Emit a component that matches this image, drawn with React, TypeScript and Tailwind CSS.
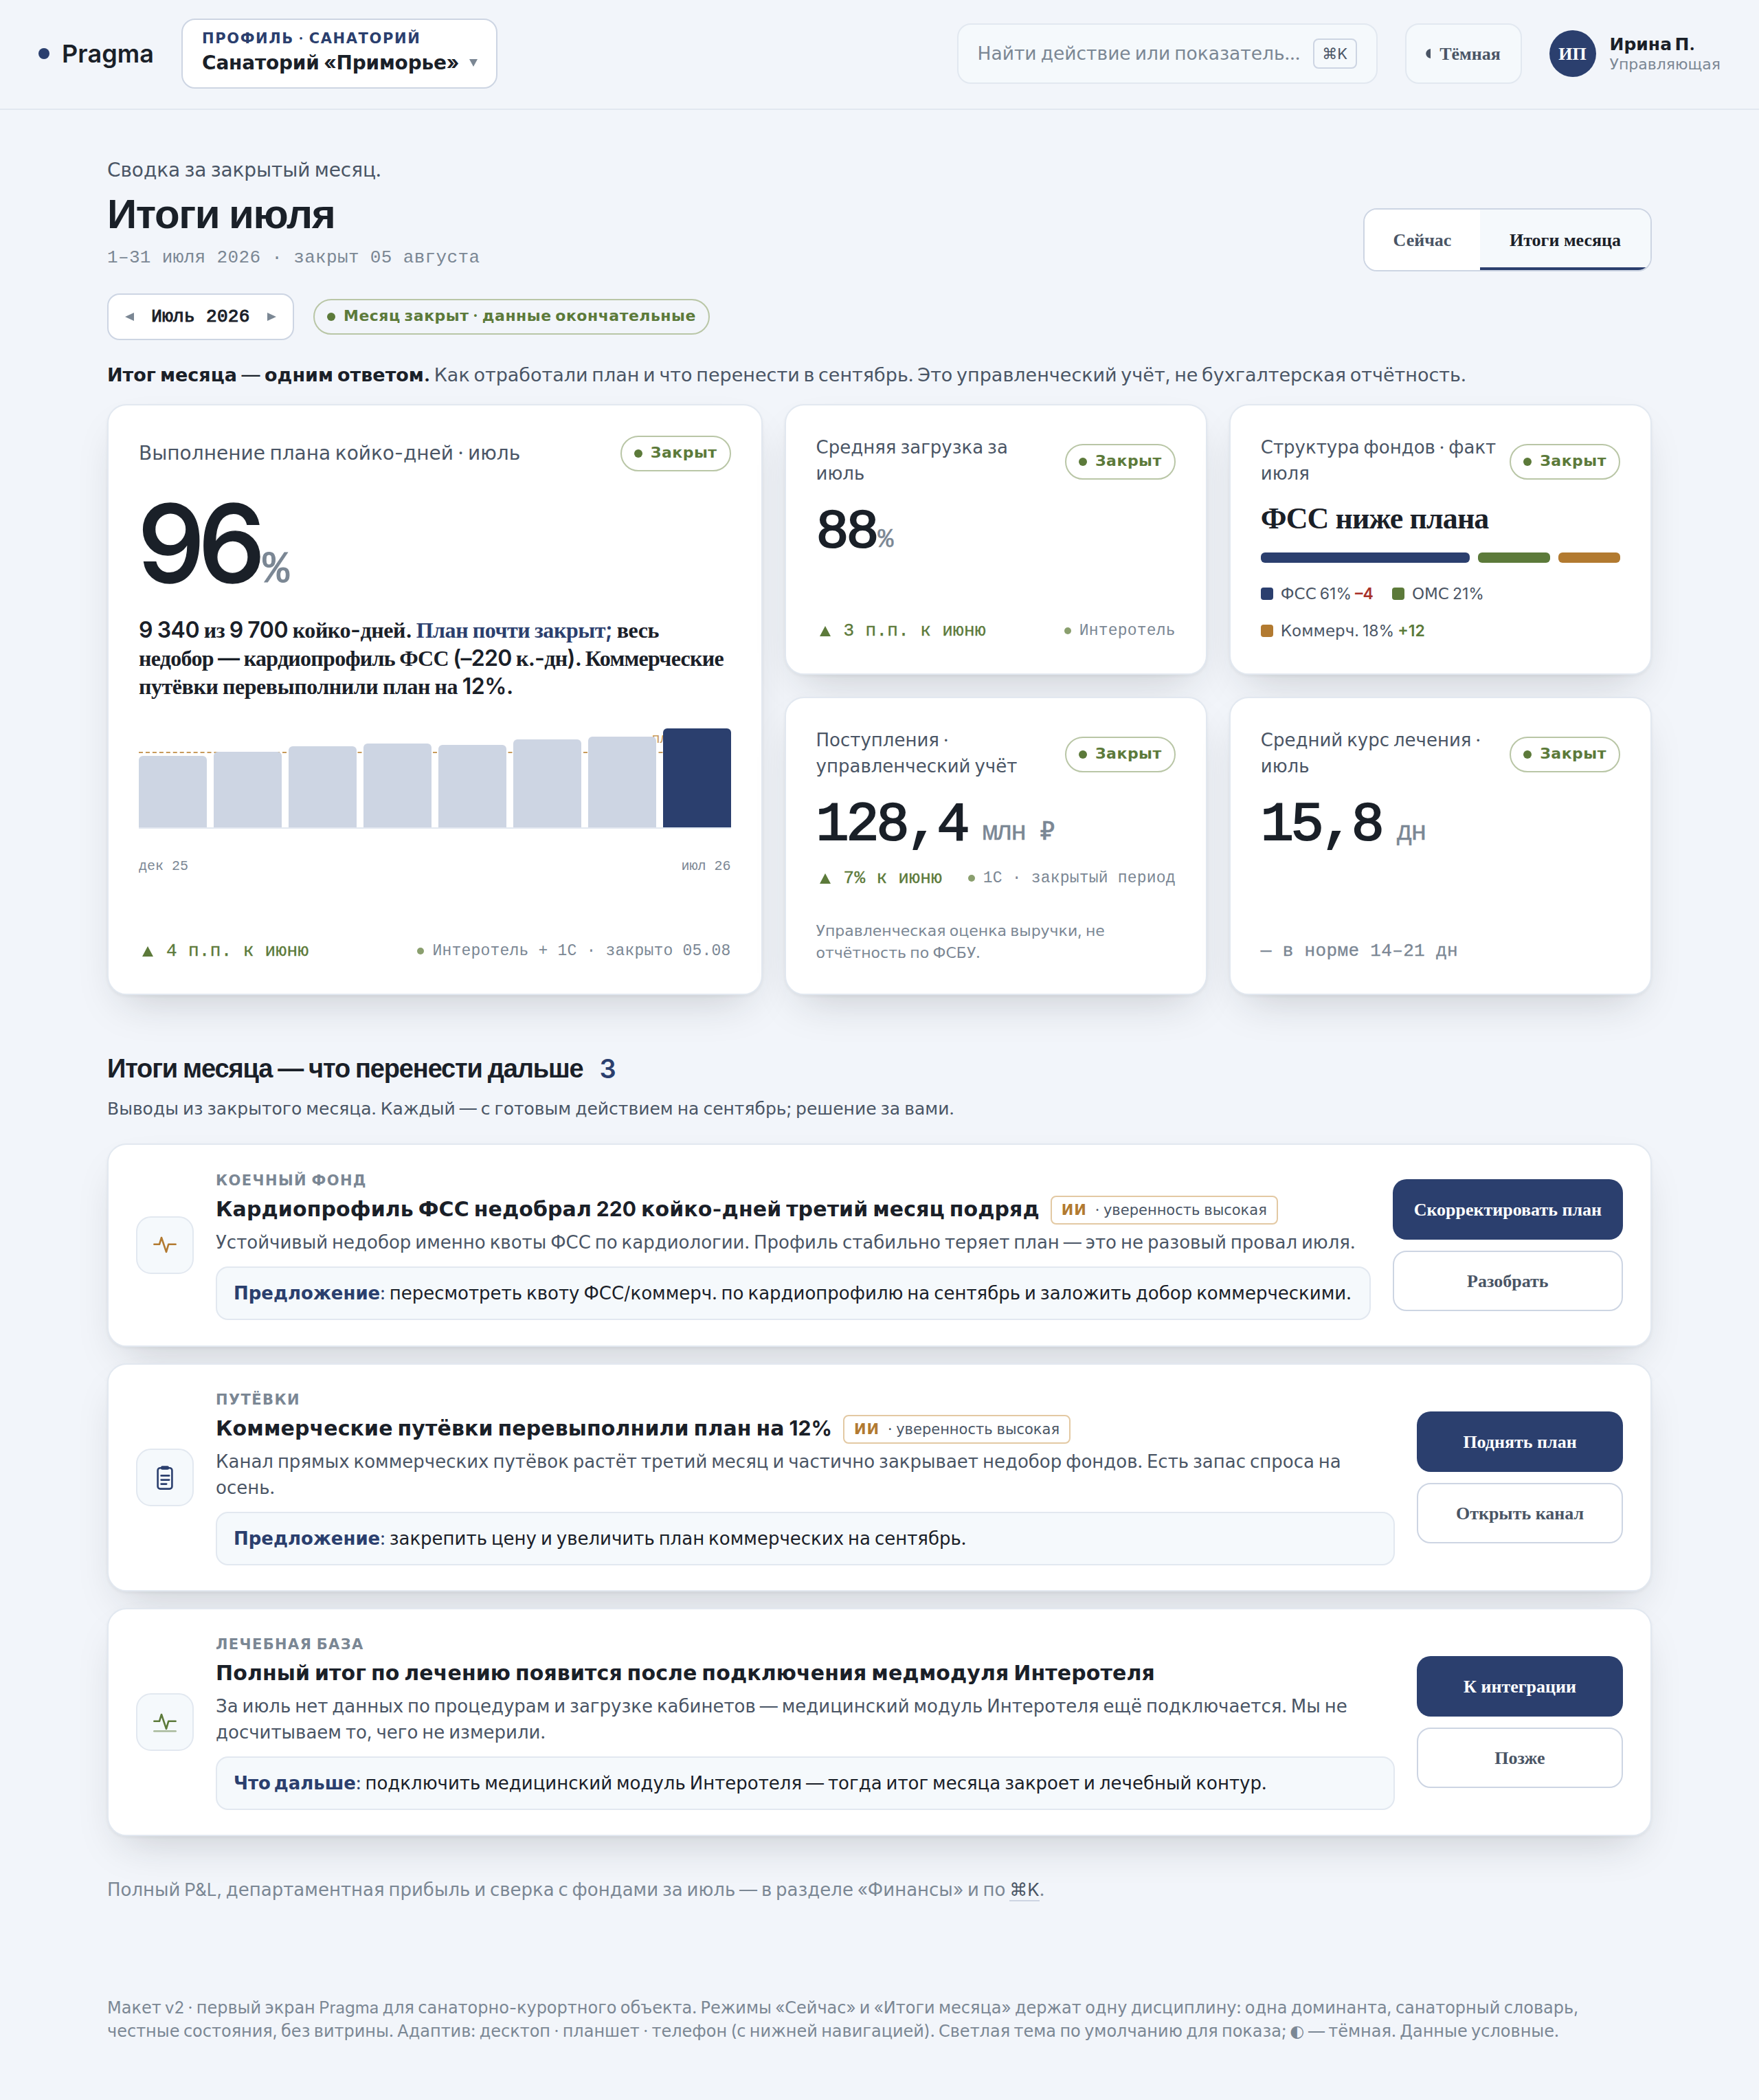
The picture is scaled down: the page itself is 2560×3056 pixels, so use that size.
import React from 'react';
import clsx from 'clsx';

interface MixProps {
  children: string;
  serif?: boolean;
}

// Latin, digits and punctuation keep the parent face, Cyrillic runs get their own one
const Mix: React.FC<MixProps> = ({ children, serif = false }) => (
  <>
    {children.split(/([\u0400-\u04FF◐]+)/).map((part, i) =>
      i % 2 === 1 ? (
        <span
          key={i}
          className={clsx(
            'leading-none',
            serif ? "font-['Liberation_Serif',serif]" : "font-['DejaVu_Sans',sans-serif]"
          )}
        >
          {part}
        </span>
      ) : (
        part
      )
    )}
  </>
);

const MONO = "font-['Liberation_Mono',monospace] [word-spacing:0px]";
const SERIF = "font-['Liberation_Serif',serif] font-bold [word-spacing:0px]";
const CARD =
  'rounded-[28px] border-2 border-[#e2e8f0] bg-white shadow-[0_2px_4px_rgba(26,32,40,0.05),0_28px_64px_-24px_rgba(26,32,40,0.21)]';

const StatusPill: React.FC<{ label: string }> = ({ label }) => (
  <span className="flex h-[52px] shrink-0 items-center gap-3 rounded-full border-2 border-[#b9c6a6] px-[18px] text-[22px] font-bold tracking-[0.5px] whitespace-nowrap text-[#5c7a3a] [word-spacing:0px]">
    <i className="size-3 rounded-full bg-[#5c7a3a]" />
    <span className="-mt-[3px]">
      <Mix>{label}</Mix>
    </span>
  </span>
);

const CardHead: React.FC<{ title: string; large?: boolean }> = ({ title, large }) => (
  <div className="flex items-center justify-between">
    <h3 className={clsx('-mt-0.5 leading-[38px] whitespace-pre text-[#4a5565]', large ? 'text-[28px]' : 'mb-0.5 text-[26px]')}>
      <Mix>{title}</Mix>
    </h3>
    <StatusPill label="Закрыт" />
  </div>
);

interface FootProps {
  delta: string;
  arrow?: boolean;
  source?: string;
}

const CardFoot: React.FC<FootProps> = ({ delta, arrow = true, source }) => (
  <div className={clsx(MONO, 'flex h-9 items-center justify-between whitespace-nowrap')}>
    <span
      className={clsx(
        'flex items-center text-[26px] tracking-[0.35px] [-webkit-text-stroke:0.35px]',
        arrow ? 'text-[#5c7a3a]' : 'text-[#7b8794]'
      )}
    >
      {arrow && (
        <svg className="mr-[19px] ml-[5px] size-4" viewBox="0 0 16 16" fill="currentColor">
          <path d="M8 1l8 15H0z" />
        </svg>
      )}
      {delta}
    </span>
    {source && (
      <span className="flex items-center gap-3 text-[23px] tracking-[0.2px] text-[#7b8794]">
        <i className="size-2.5 rounded-full bg-[#8a9f6e]" />
        {source}
      </span>
    )}
  </div>
);

const Value: React.FC<{ value: string; unit: string; spaced?: boolean }> = ({ value, unit, spaced }) => (
  <div className={clsx(MONO, 'mt-3 flex h-[106px] items-baseline leading-[106px] whitespace-nowrap')}>
    <span className="text-[80px] tracking-[-4px] text-[#1a2028] [-webkit-text-stroke:2.2px]">{value}</span>
    <span
      className={clsx(
        'text-[38px] tracking-[-2px] text-[#7b8794] [-webkit-text-stroke:0.5px]',
        spaced ? 'ml-[22px]' : 'ml-0.5'
      )}
    >
      {unit}
    </span>
  </div>
);

const bars = [104, 110, 118, 122, 120, 128, 132, 144];

const PlanChart: React.FC = () => (
  <div>
    <div className="relative flex h-[162px] items-end gap-2.5 border-b-2 border-[#e2e8f0]">
      <div className="absolute inset-x-0 bottom-[108px] border-t-2 border-dashed border-[#c79a5b]" />
      <span className={clsx(MONO, 'absolute right-[19px] bottom-[116px] text-[20px] leading-6 text-[#c79a5b]')}>
        план 92%
      </span>
      {bars.map((height, i) => (
        <div
          key={i}
          className={clsx('relative flex-1 rounded-t-md', i === bars.length - 1 ? 'bg-[#2b3f6e]' : 'bg-[#cdd5e3]')}
          style={{ height }}
        />
      ))}
    </div>
    <div className={clsx(MONO, 'mt-10 flex justify-between text-[20px] leading-[30px] text-[#7b8794]')}>
      <span>дек 25</span>
      <span>июл 26</span>
    </div>
  </div>
);

const funds = [
  { name: 'ФСС 61%', delta: '–4', share: 61, color: 'bg-[#2b3f6e]', deltaColor: 'text-[#a8322a]' },
  { name: 'ОМС 21%', delta: '', share: 21, color: 'bg-[#5c7a3a]', deltaColor: '' },
  { name: 'Коммерч. 18%', delta: '+12', share: 18, color: 'bg-[#b27a30]', deltaColor: 'text-[#5c7a3a]' },
];

const PulseIcon: React.FC<{ base?: boolean }> = ({ base }) => (
  <svg
    className="size-10"
    viewBox="0 0 20 20"
    fill="none"
    stroke="currentColor"
    strokeWidth="1.3"
    strokeLinecap="round"
    strokeLinejoin="round"
  >
    <path d="M2.2 9.4H6l1.5-4.9 3.5 10.4 1.6-5.5h5.2" />
    {base && <path d="M2.2 16.6h15.6" opacity="0.5" />}
  </svg>
);

const ClipboardIcon: React.FC = () => (
  <svg
    className="size-10"
    viewBox="0 0 20 20"
    fill="none"
    stroke="currentColor"
    strokeWidth="1.3"
    strokeLinecap="round"
    strokeLinejoin="round"
  >
    <rect x="4.8" y="3.1" width="10.4" height="15.2" rx="1.8" />
    <path d="M7.3 8.7h5.8M7.3 11.8h5.8M7.3 14.8h3.8" />
    <rect x="7.6" y="2.3" width="4.8" height="1.4" rx="0.6" />
  </svg>
);

interface Insight {
  area: string;
  title: string;
  confidence?: string;
  text: string;
  lead: string;
  proposal: string;
  primary: string;
  secondary: string;
  icon: React.ReactNode;
  iconColor: string;
}

const insights: Insight[] = [
  {
    area: 'КОЕЧНЫЙ ФОНД',
    title: 'Кардиопрофиль ФСС недобрал 220 койко-дней третий месяц подряд',
    confidence: '· уверенность высокая',
    text: 'Устойчивый недобор именно квоты ФСС по кардиологии. Профиль стабильно теряет план — это не разовый провал июля.',
    lead: 'Предложение',
    proposal: 'пересмотреть квоту ФСС/коммерч. по кардиопрофилю на сентябрь и заложить добор коммерческими.',
    primary: 'Скорректировать план',
    secondary: 'Разобрать',
    icon: <PulseIcon />,
    iconColor: 'text-[#b27a30]',
  },
  {
    area: 'ПУТЁВКИ',
    title: 'Коммерческие путёвки перевыполнили план на 12%',
    confidence: '· уверенность высокая',
    text: 'Канал прямых коммерческих путёвок растёт третий месяц и частично закрывает недобор фондов. Есть запас спроса на осень.',
    lead: 'Предложение',
    proposal: 'закрепить цену и увеличить план коммерческих на сентябрь.',
    primary: 'Поднять план',
    secondary: 'Открыть канал',
    icon: <ClipboardIcon />,
    iconColor: 'text-[#2b3f6e]',
  },
  {
    area: 'ЛЕЧЕБНАЯ БАЗА',
    title: 'Полный итог по лечению появится после подключения медмодуля Интеротеля',
    text: 'За июль нет данных по процедурам и загрузке кабинетов — медицинский модуль Интеротеля ещё подключается. Мы не досчитываем то, чего не измерили.',
    lead: 'Что дальше',
    proposal: 'подключить медицинский модуль Интеротеля — тогда итог месяца закроет и лечебный контур.',
    primary: 'К интеграции',
    secondary: 'Позже',
    icon: <PulseIcon base />,
    iconColor: 'text-[#5c7a3a]',
  },
];

const InsightCard: React.FC<{ item: Insight }> = ({ item }) => (
  <article className={clsx(CARD, 'flex min-h-[296px] items-center gap-8 px-10 py-9')}>
    <div
      className={clsx(
        'flex size-[84px] shrink-0 items-center justify-center rounded-[22px] border-2 border-[#e2e8f0] bg-[#f5f9fc]',
        item.iconColor
      )}
    >
      {item.icon}
    </div>
    <div className="min-w-0 flex-1">
      <div className="text-[21px] leading-[30px] font-bold tracking-[1.4px] text-[#7b8794] [word-spacing:0px]">
        <Mix>{item.area}</Mix>
      </div>
      <div className="flex h-[54px] items-center gap-4">
        <h3 className="-mt-0.5 text-[30px] leading-[38px] font-bold tracking-[0.1px] whitespace-nowrap text-[#1a2028] [word-spacing:-0.4px]">
          <Mix>{item.title}</Mix>
        </h3>
        {item.confidence && (
          <span className="mt-0.5 flex h-[42px] items-center gap-3 rounded-lg border-2 border-[#e3c9a3] px-3.5 text-[21px] whitespace-nowrap text-[#4a5565]">
            <b className="tracking-[1px] text-[#b27a30]">
              <Mix>ИИ</Mix>
            </b>
            <span className="[word-spacing:0px]">
              <Mix>{item.confidence}</Mix>
            </span>
          </span>
        )}
      </div>
      <p className="mt-0.5 text-[26px] leading-[38px] text-[#4a5565]">
        <Mix>{item.text}</Mix>
      </p>
      <div className="mt-4 flex h-[78px] items-center rounded-[18px] border-2 border-[#e2e8f0] bg-[#f5f9fc] px-6 pb-0.5 text-[26px] whitespace-nowrap text-[#1a2028]">
        <p>
          <span className="text-[#2b3f6e]">
            <b>
              <Mix>{item.lead}</Mix>
            </b>
            :
          </span>{' '}
          <Mix>{item.proposal}</Mix>
        </p>
      </div>
    </div>
    <div className={clsx(SERIF, 'flex min-w-[300px] shrink-0 flex-col gap-4 text-[26px]')}>
      <button className="h-[88px] rounded-[20px] bg-[#2b3f6e] px-[31px] text-white">{item.primary}</button>
      <button className="h-[88px] rounded-[20px] border-2 border-[#cdd5e3] bg-white px-[29px] text-[#4a5565]">
        {item.secondary}
      </button>
    </div>
  </article>
);

const Header: React.FC = () => (
  <header className="flex h-40 items-center justify-between border-b-2 border-[#e2e8f0] px-14 pb-0.5">
    <div className="flex items-center gap-10">
      <div className="flex items-center gap-[18px] text-[36px] font-semibold tracking-[0.1px] text-[#1a2028]">
        <i className="size-4 rounded-full bg-[#2b3f6e]" />
        Pragma
      </div>
      <button className="h-[102px] w-[460px] rounded-[20px] border-2 border-[#cdd5e3] bg-white px-7 pb-1 text-left whitespace-nowrap">
        <div className="text-[21px] leading-[30px] font-bold tracking-[1.6px] text-[#2b3f6e]">
          <Mix>ПРОФИЛЬ · САНАТОРИЙ</Mix>
        </div>
        <div className="flex items-center gap-[15px] text-[28px] leading-10 font-bold tracking-[-0.2px] text-[#1a2028]">
          <span>
            <Mix>Санаторий «Приморье»</Mix>
          </span>
          <svg className="size-3 shrink-0 text-[#7b8794]" viewBox="0 0 12 12" fill="currentColor">
            <path d="M0 1h12L6 12z" />
          </svg>
        </div>
      </button>
    </div>
    <div className="flex items-center gap-10">
      <div className="flex h-[88px] w-[612px] items-center justify-between rounded-[20px] border-2 border-[#e2e8f0] bg-[#f5f9fc] px-7 text-[26.5px] whitespace-nowrap text-[#7b8794]">
        <span>
          <Mix>Найти действие или показатель…</Mix>
        </span>
        <kbd className="flex h-11 w-16 items-center justify-center rounded-lg border-2 border-[#cdd5e3] font-['DejaVu_Sans',sans-serif] text-[22px] text-[#4a5565]">
          ⌘<span className="font-['Inter',sans-serif]">K</span>
        </kbd>
      </div>
      <button
        className={clsx(
          SERIF,
          'flex h-[88px] w-[170px] items-center justify-center gap-3 rounded-[20px] border-2 border-[#e2e8f0] bg-[#f5f9fc] text-[26px] text-[#4a5565]'
        )}
      >
        <svg className="h-3.5 w-2" viewBox="0 0 8 14" fill="currentColor">
          <path d="M7 0v14C-2 12-2 2 7 0z" />
        </svg>
        Тёмная
      </button>
      <div className="flex items-center gap-5">
        <div
          className={clsx(SERIF, 'flex size-[68px] items-center justify-center rounded-full bg-[#2b3f6e] text-[26px] text-white')}
        >
          ИП
        </div>
        <div className="whitespace-nowrap">
          <div className="text-[25px] leading-[30px] font-bold text-[#1a2028]">
            <Mix>Ирина П.</Mix>
          </div>
          <div className="text-[22px] leading-7 text-[#7b8794]">
            <Mix>Управляющая</Mix>
          </div>
        </div>
      </div>
    </div>
  </header>
);

const Intro: React.FC = () => (
  <section>
    <div className="flex items-end justify-between">
      <div>
        <p className="text-[28px] leading-[42px] tracking-[-0.1px] text-[#4a5565]">
          <Mix>Сводка за закрытый месяц.</Mix>
        </p>
        <h1 className="mt-2 font-['Liberation_Sans',sans-serif] text-[60px] leading-[72px] font-bold tracking-[-1.4px] text-[#1a2028]">
          Итоги июля
        </h1>
        <p className={clsx(MONO, 'mt-2 text-[26px] leading-[39px] tracking-[0.35px] text-[#7b8794]')}>
          1–31 июля 2026 · закрыт 05 августа
        </p>
      </div>
      <div className={clsx(SERIF, 'flex h-[92px] overflow-hidden rounded-[20px] border-2 border-[#cdd5e3] text-[26px]')}>
        <button className="w-[168px] bg-white text-[#4a5565]">Сейчас</button>
        <button className="w-[248px] border-b-4 border-[#2b3f6e] bg-[#f5f9fc] pt-1 text-[#1a2028]">Итоги месяца</button>
      </div>
    </div>
    <div className="mt-8 flex items-center gap-7">
      <div
        className={clsx(
          MONO,
          'flex h-[68px] w-[272px] items-center justify-between rounded-[18px] border-2 border-[#cdd5e3] bg-white px-6 text-[26px] tracking-[0.35px] text-[#1a2028] [-webkit-text-stroke:1px]'
        )}
      >
        <svg className="size-3.5 text-[#7b8794]" viewBox="0 0 14 14" fill="currentColor">
          <path d="M0 7l13-6v12z" />
        </svg>
        Июль 2026
        <svg className="size-3.5 text-[#7b8794]" viewBox="0 0 14 14" fill="currentColor">
          <path d="M14 7L1 1v12z" />
        </svg>
      </div>
      <StatusPill label="Месяц закрыт · данные окончательные" />
    </div>
    <p className="mt-[31px] text-[27px] leading-10 whitespace-nowrap text-[#4a5565] [word-spacing:-1.9px]">
      <b className="text-[#1a2028] [word-spacing:-0.4px]">
        <Mix>Итог месяца</Mix>
      </b>
      <span className="text-[#1a2028] [word-spacing:-1px]"> — </span>
      <b className="text-[#1a2028] [word-spacing:-0.4px]">
        <Mix>одним ответом.</Mix>
      </b>{' '}
      <Mix>Как отработали план и что перенести в сентябрь. Это управленческий учёт, не бухгалтерская отчётность.</Mix>
    </p>
  </section>
);

const Metrics: React.FC = () => (
  <section className="mt-[22px] grid grid-cols-[1.55fr_1fr_1fr] grid-rows-[394px_434px] gap-8">
    <article className={clsx(CARD, 'row-span-2 flex flex-col p-11')}>
      <CardHead title="Выполнение плана койко-дней · июль" large />
      <div className="mt-[25px] flex h-[158px] items-baseline leading-[160px]">
        <span className="-ml-0.5 text-[156px] font-medium tracking-[-10px] text-[#1a2028] [-webkit-text-stroke:1.4px]">
          96
        </span>
        <span className={clsx(MONO, 'ml-1.5 text-[64px] text-[#7b8794] [-webkit-text-stroke:1px]')}>%</span>
      </div>
      <p className="mt-[27px] text-[32px] leading-[41px] font-semibold tracking-[-0.45px] whitespace-nowrap text-[#1a2028] [word-spacing:-1px]">
        <Mix serif>9 340 из 9 700 койко-дней. </Mix>
        <span className="text-[#2b3f6e]">
          <Mix serif>План почти закрыт;</Mix>
        </span>
        <Mix serif> весь</Mix>
        <br />
        <span className="tracking-[-0.72px]">
          <Mix serif>недобор — кардиопрофиль ФСС (–220 к.-дн). Коммерческие</Mix>
        </span>
        <br />
        <Mix serif>путёвки перевыполнили план на 12%.</Mix>
      </p>
      <div className="mt-[25px]">
        <PlanChart />
      </div>
      <div className="mt-auto">
        <CardFoot delta="4 п.п. к июню" source="Интеротель + 1С · закрыто 05.08" />
      </div>
    </article>

    <article className={clsx(CARD, 'flex flex-col p-11')}>
      <CardHead title={'Средняя загрузка за\nиюль'} />
      <Value value="88" unit="%" />
      <div className="mt-auto">
        <CardFoot delta="3 п.п. к июню" source="Интеротель" />
      </div>
    </article>

    <article className={clsx(CARD, 'flex flex-col p-11')}>
      <CardHead title={'Структура фондов · факт\nиюля'} />
      <h4 className={clsx(SERIF, 'mt-5 text-[44px] leading-[50px] tracking-[-0.9px] text-[#1a2028]')}>ФСС ниже плана</h4>
      <div className="mt-6 flex h-4 gap-3">
        {funds.map((fund) => (
          <div key={fund.name} className={clsx('rounded-md', fund.color)} style={{ width: `${fund.share}%` }} />
        ))}
      </div>
      <ul className="mt-[27px] flex flex-wrap gap-x-[27px] gap-y-[18px] text-[23px] leading-9 text-[#4a5565]">
        {funds.map((fund) => (
          <li key={fund.name} className="flex items-center gap-[11px]">
            <i className={clsx('size-[18px] rounded', fund.color)} />
            <span>
              <Mix>{fund.name}</Mix> {fund.delta && <b className={clsx('font-semibold', fund.deltaColor)}>{fund.delta}</b>}
            </span>
          </li>
        ))}
      </ul>
    </article>

    <article className={clsx(CARD, 'flex flex-col p-11')}>
      <CardHead title={'Поступления ·\nуправленческий учёт'} />
      <Value value="128,4" unit="млн ₽" spaced />
      <div className="mt-1.5">
        <CardFoot delta="7% к июню" source="1С · закрытый период" />
      </div>
      <p className="mt-auto text-[22px] leading-8 text-[#7b8794] [word-spacing:-0.8px]">
        <Mix>Управленческая оценка выручки, не отчётность по ФСБУ.</Mix>
      </p>
    </article>

    <article className={clsx(CARD, 'flex flex-col p-11')}>
      <CardHead title={'Средний курс лечения ·\nиюль'} />
      <Value value="15,8" unit="дн" spaced />
      <div className="mt-auto">
        <CardFoot delta="— в норме 14–21 дн" arrow={false} />
      </div>
    </article>
  </section>
);

export default function App() {
  return (
    <div className="min-h-[3056px] bg-[#f2f5fa] font-['Inter',sans-serif] [word-spacing:-1.4px]">
      <Header />
      <main className="mx-auto w-[2248px] pt-[66px]">
        <Intro />
        <Metrics />
        <section className="mt-[84px]">
          <h2 className="flex items-center gap-6 font-['Liberation_Sans',sans-serif] text-[38px] leading-[46px] font-bold tracking-[-1.15px] text-[#1a2028]">
            Итоги месяца — что перенести дальше
            <span className="font-['Inter',sans-serif] font-semibold text-[#2b3f6e]">3</span>
          </h2>
          <p className="mt-4 text-[25px] leading-[38px] text-[#4a5565] [word-spacing:-1px]">
            <Mix>Выводы из закрытого месяца. Каждый — с готовым действием на сентябрь; решение за вами.</Mix>
          </p>
          <div className="mt-8 flex flex-col gap-6">
            {insights.map((item) => (
              <InsightCard key={item.area} item={item} />
            ))}
          </div>
        </section>
        <p className="mt-[58px] text-[26px] leading-10 text-[#7b8794] [word-spacing:-1.5px]">
          <Mix>Полный P&L, департаментная прибыль и сверка с фондами за июль — в разделе «Финансы» и по </Mix>
          <span className="border-b-2 border-[#cdd5e3] text-[#4a5565]">
            <span className="font-['DejaVu_Sans',sans-serif] leading-none">⌘</span>K
          </span>
          .
        </p>
        <p className="mt-[135px] text-[24px] leading-[34px] text-[#7b8794]">
          <Mix>
            Макет v2 · первый экран Pragma для санаторно-курортного объекта. Режимы «Сейчас» и «Итоги месяца» держат одну дисциплину: одна доминанта, санаторный словарь, честные состояния, без витрины. Адаптив: десктоп · планшет · телефон (с нижней навигацией). Светлая тема по умолчанию для показа; ◐ — тёмная. Данные условные.
          </Mix>
        </p>
      </main>
    </div>
  );
}
